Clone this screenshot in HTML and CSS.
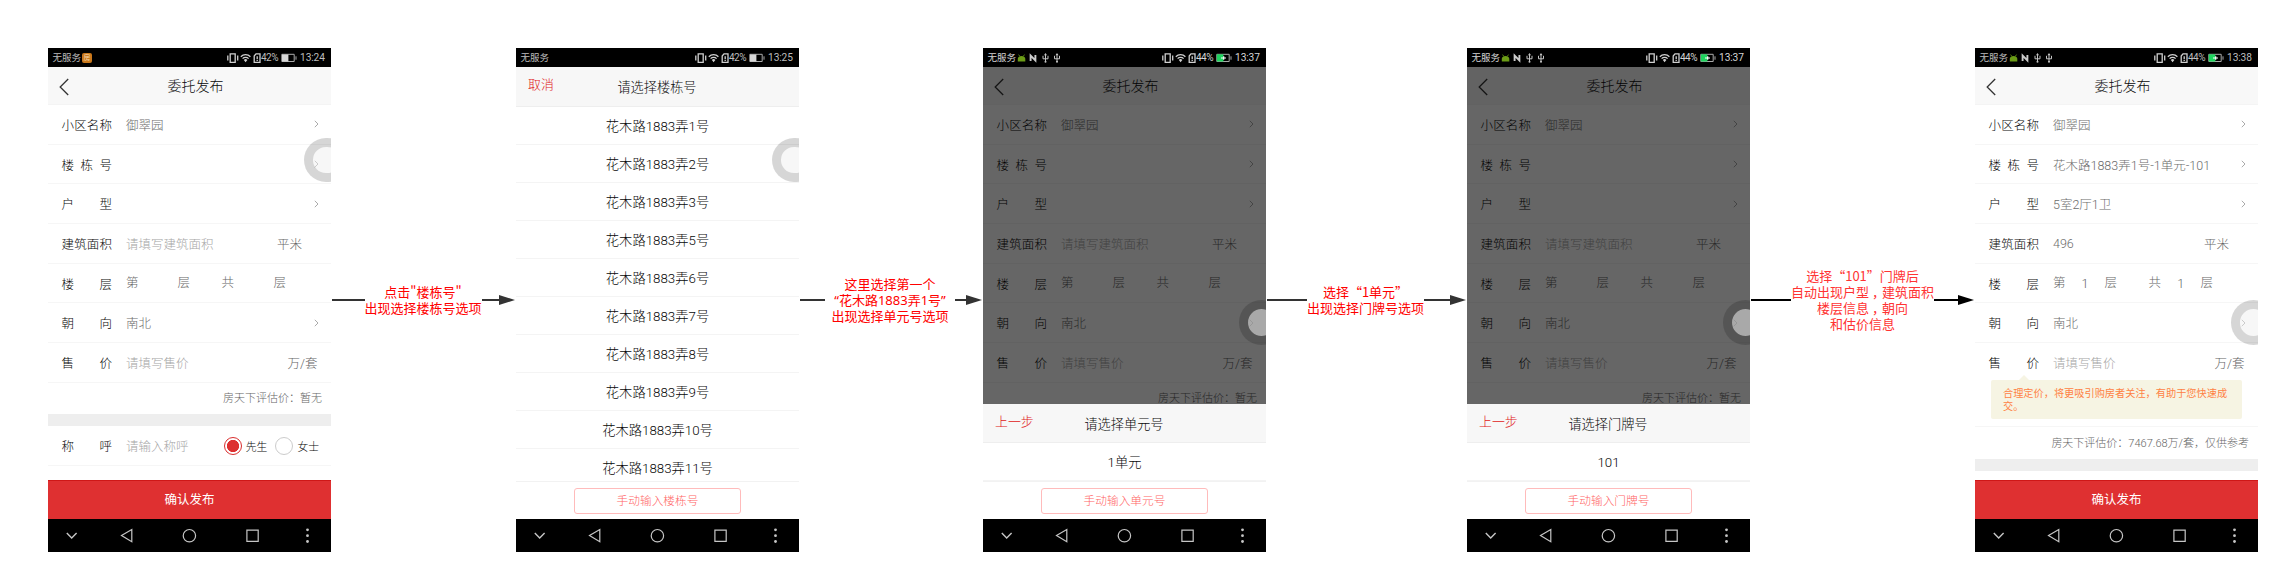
FILE: index.html
```html
<!DOCTYPE html>
<html lang="zh-CN">
<head>
<meta charset="utf-8">
<title>委托发布流程</title>
<link rel="stylesheet" href="styles.css">
</head>
<body>
<svg class="defs" width="0" height="0" aria-hidden="true">
  <symbol id="signal" viewBox="0 0 34 12">
    <g fill="none" stroke="#d0d0d0" stroke-width="1.3">
      <path d="M3.2 1.800h5v8.600h-5zM.8 3.5v5M10.700 3.5v5"/>
      <path d="M13.800 4.700a6.700 6.700 0 0 1 9.600 0M15.600 6.600a4.200 4.200 0 0 1 6 0"/>
      <path d="M27.200 4l1.800-2.200h4v8.600h-5.800zM30.200 4.200v3M30.200 8v1"/>
    </g>
    <path d="M16.800 7.900a2.600 2.600 0 0 1 3.600 0l-1.800 2.400z" fill="#d0d0d0"/>
  </symbol>
  <symbol id="battery" viewBox="0 0 16 10">
    <path d="M.8 1.300h12.400v7.200H.8zM15 3.3v3.4" fill="none" stroke="#aaa" stroke-width="1"/>
    <path d="M1 1.500h6.400v7H1z" fill="#d8d8d8"/>
  </symbol>
  <symbol id="charging" viewBox="0 0 16 10">
    <path d="M.8 1.300h12.400v7.200H.8zM15 3.3v3.4" fill="none" stroke="#aaa" stroke-width="1"/>
    <path d="M.8 1.300h6.600v7.200H.8z" fill="#1fd35e"/>
    <path d="M5 5h5M7.700 3.300v3.400" stroke="#fff" stroke-width="1.2"/>
  </symbol>
  <symbol id="notices" viewBox="0 0 44 12">
    <path d="M.8 6.800C1 3.200 8 3.200 8.300 6.800V9.600H.8z" fill="#6b9c16"/>
    <path d="M1.600 2.600l1.400 2M7.500 2.600l-1.400 2" stroke="#6b9c16" stroke-width=".8"/>
    <path d="M13.600 9V3.500l4.800 5V3" fill="none" stroke="#ccc" stroke-width="1.900"/>
    <g fill="none" stroke="#c4c4c4" stroke-width="1">
      <path d="M28.500 2v8M26 3.800v3h5v-3"/>
      <path d="M40 2v8M37.500 3.800v3h5v-3"/>
    </g>
    <g fill="#c4c4c4">
      <path d="M27 3.200L28.500 1 30 3.200zM38.500 3.200L40 1l1.500 2.200z"/>
      <circle cx="28.500" cy="9.800" r="1"/><circle cx="40" cy="9.800" r="1"/>
    </g>
  </symbol>
  <symbol id="nav" viewBox="0 0 283 33">
    <g fill="none" stroke="#c6c6c6" stroke-width="1.200">
      <path d="M18.800 14l4.900 5 4.900-5" stroke-width="1.400"/>
      <path d="M83.800 10.500v12.200L73.500 16.600z"/>
      <circle cx="141.400" cy="16.700" r="6.200"/>
      <path d="M198.900 11.100h11.300v11.300h-11.300z"/>
    </g>
    <g fill="#c6c6c6"><circle cx="259.500" cy="10.800" r="1.400"/><circle cx="259.500" cy="16.700" r="1.400"/><circle cx="259.500" cy="22.500" r="1.400"/></g>
  </symbol>
  <symbol id="back" viewBox="0 0 10 18"><path d="M9.200 1L1.200 9l8 8" fill="none" stroke="#333" stroke-width="1.300"/></symbol>
  <symbol id="more" viewBox="0 0 5 8"><path d="M.8.8L4 4 .8 7.200" fill="none" stroke="#aaa" stroke-width="1"/></symbol>
</svg>

<main class="flow">
  <section class="phone">
    <div class="status"><span>无服务</span><i class="app-icon">房</i><div class="status-right"><svg class="signal"><use href="#signal"/></svg><span class="pct">42%</span><svg class="battery"><use href="#battery"/></svg><span class="time">13:24</span></div></div>
    <div class="screen">
      <header class="title-bar"><svg class="back"><use href="#back"/></svg>委托发布</header>
      <div class="row"><label>小区名称</label><span class="value">御翠园</span><svg class="more"><use href="#more"/></svg></div>
      <div class="row"><label>楼栋号</label><span class="value"></span><svg class="more"><use href="#more"/></svg></div>
      <div class="row"><label>户型</label><span class="value"></span><svg class="more"><use href="#more"/></svg></div>
      <div class="row"><label>建筑面积</label><span class="value hint">请填写建筑面积</span><span class="unit area">平米</span></div>
      <div class="row"><label>楼层</label><div class="floors"><span>第</span><b></b><span>层</span><span>共</span><b></b><span>层</span></div></div>
      <div class="row"><label>朝向</label><span class="value">南北</span><svg class="more"><use href="#more"/></svg></div>
      <div class="row"><label>售价</label><span class="value hint">请填写售价</span><span class="unit">万/套</span></div>
      <div class="estimate">房天下评估价：暂无</div>
      <div class="divider"></div>
      <div class="row"><label>称呼</label><span class="value hint">请输入称呼</span><div class="radios"><i class="radio on"></i><span>先生</span><i class="radio"></i><span>女士</span></div></div>
      <div class="float-ball upper"></div>
    </div>
    <div class="submit">确认发布</div>
    <svg class="nav"><use href="#nav"/></svg>
  </section>

  <div class="link w1"><i class="line"></i><p>点击"楼栋号"<br>出现选择楼栋号选项</p><i class="line"></i><i class="head"></i></div>

  <section class="phone">
    <div class="status"><span>无服务</span><div class="status-right"><svg class="signal"><use href="#signal"/></svg><span class="pct">42%</span><svg class="battery"><use href="#battery"/></svg><span class="time">13:25</span></div></div>
    <div class="screen">
      <header class="picker-bar"><span class="cancel">取消</span>请选择楼栋号</header>
      <ul class="options">
        <li>花木路1883弄1号</li><li>花木路1883弄2号</li><li>花木路1883弄3号</li><li>花木路1883弄5号</li><li>花木路1883弄6号</li><li>花木路1883弄7号</li><li>花木路1883弄8号</li><li>花木路1883弄9号</li><li>花木路1883弄10号</li><li>花木路1883弄11号</li>
      </ul>
      <div class="float-ball upper"></div>
    </div>
    <div class="manual"><span>手动输入楼栋号</span></div>
    <svg class="nav"><use href="#nav"/></svg>
  </section>

  <div class="link w2"><i class="line"></i><p>这里选择第一个<br><span class="latin">“花木路1883弄1号”</span><br>出现选择单元号选项</p><i class="line"></i><i class="head"></i></div>

  <section class="phone">
    <div class="status bright"><span>无服务</span><svg class="notices"><use href="#notices"/></svg><div class="status-right"><svg class="signal"><use href="#signal"/></svg><span class="pct">44%</span><svg class="battery"><use href="#charging"/></svg><span class="time">13:37</span></div></div>
    <div class="screen">
      <header class="title-bar"><svg class="back"><use href="#back"/></svg>委托发布</header>
      <div class="row"><label>小区名称</label><span class="value">御翠园</span><svg class="more"><use href="#more"/></svg></div>
      <div class="row"><label>楼栋号</label><span class="value"></span><svg class="more"><use href="#more"/></svg></div>
      <div class="row"><label>户型</label><span class="value"></span><svg class="more"><use href="#more"/></svg></div>
      <div class="row"><label>建筑面积</label><span class="value hint">请填写建筑面积</span><span class="unit area">平米</span></div>
      <div class="row"><label>楼层</label><div class="floors"><span>第</span><b></b><span>层</span><span>共</span><b></b><span>层</span></div></div>
      <div class="row"><label>朝向</label><span class="value">南北</span><svg class="more"><use href="#more"/></svg></div>
      <div class="row"><label>售价</label><span class="value hint">请填写售价</span><span class="unit">万/套</span></div>
      <div class="estimate">房天下评估价：暂无</div>
      <div class="mask"></div>
      <div class="float-ball lower"></div>
    </div>
    <div class="sheet">
      <header class="picker-bar"><span class="cancel">上一步</span>请选择单元号</header>
      <ul class="options"><li>1单元</li></ul>
    </div>
    <div class="manual shifted"><span>手动输入单元号</span></div>
    <svg class="nav"><use href="#nav"/></svg>
  </section>

  <div class="link w3"><i class="line"></i><p>选择“1单元”<br>出现选择门牌号选项</p><i class="line"></i><i class="head"></i></div>

  <section class="phone">
    <div class="status bright"><span>无服务</span><svg class="notices"><use href="#notices"/></svg><div class="status-right"><svg class="signal"><use href="#signal"/></svg><span class="pct">44%</span><svg class="battery"><use href="#charging"/></svg><span class="time">13:37</span></div></div>
    <div class="screen">
      <header class="title-bar"><svg class="back"><use href="#back"/></svg>委托发布</header>
      <div class="row"><label>小区名称</label><span class="value">御翠园</span><svg class="more"><use href="#more"/></svg></div>
      <div class="row"><label>楼栋号</label><span class="value"></span><svg class="more"><use href="#more"/></svg></div>
      <div class="row"><label>户型</label><span class="value"></span><svg class="more"><use href="#more"/></svg></div>
      <div class="row"><label>建筑面积</label><span class="value hint">请填写建筑面积</span><span class="unit area">平米</span></div>
      <div class="row"><label>楼层</label><div class="floors"><span>第</span><b></b><span>层</span><span>共</span><b></b><span>层</span></div></div>
      <div class="row"><label>朝向</label><span class="value">南北</span><svg class="more"><use href="#more"/></svg></div>
      <div class="row"><label>售价</label><span class="value hint">请填写售价</span><span class="unit">万/套</span></div>
      <div class="estimate">房天下评估价：暂无</div>
      <div class="mask"></div>
      <div class="float-ball lower"></div>
    </div>
    <div class="sheet">
      <header class="picker-bar"><span class="cancel">上一步</span>请选择门牌号</header>
      <ul class="options"><li>101</li></ul>
    </div>
    <div class="manual"><span>手动输入门牌号</span></div>
    <svg class="nav"><use href="#nav"/></svg>
  </section>

  <div class="link w4"><i class="line"></i><p>选择“101”门牌后<br>自动出现户型<span class="comma">，</span>建筑面积<br>楼层信息<span class="comma">，</span>朝向<br>和估价信息</p><i class="line"></i><i class="head"></i></div>

  <section class="phone">
    <div class="status"><span>无服务</span><svg class="notices"><use href="#notices"/></svg><div class="status-right"><svg class="signal"><use href="#signal"/></svg><span class="pct">44%</span><svg class="battery"><use href="#charging"/></svg><span class="time">13:38</span></div></div>
    <div class="screen">
      <header class="title-bar"><svg class="back"><use href="#back"/></svg>委托发布</header>
      <div class="row"><label>小区名称</label><span class="value">御翠园</span><svg class="more"><use href="#more"/></svg></div>
      <div class="row"><label>楼栋号</label><span class="value">花木路1883弄1号-1单元-101</span><svg class="more"><use href="#more"/></svg></div>
      <div class="row"><label>户型</label><span class="value">5室2厅1卫</span><svg class="more"><use href="#more"/></svg></div>
      <div class="row"><label>建筑面积</label><span class="value">496</span><span class="unit area">平米</span></div>
      <div class="row"><label>楼层</label><div class="floors"><span>第</span><b>1</b><span>层</span><span>共</span><b>1</b><span>层</span></div></div>
      <div class="row"><label>朝向</label><span class="value">南北</span><svg class="more"><use href="#more"/></svg></div>
      <div class="row no-line"><label>售价</label><span class="value hint">请填写售价</span><span class="unit">万/套</span></div>
      <div class="tip-wrap"><div class="tip">合理定价，将更吸引购房者关注，有助于您快速成交。</div></div>
      <div class="estimate final">房天下评估价：7467.68万/套，仅供参考</div>
      <div class="divider"></div>
      <div class="float-ball lower"></div>
    </div>
    <div class="submit">确认发布</div>
    <svg class="nav"><use href="#nav"/></svg>
  </section>
</main>
</body>
</html>
```

FILE: styles.css
```css
* { box-sizing: border-box; }

body {
  margin: 0;
  background: #fff;
  font-family: Roboto, "Noto Sans CJK SC", sans-serif;
  font-weight: 300;
  color: #080808;
}

.defs { position: absolute; }
svg { display: block; flex: none; }
i { font-style: normal; }

.flow {
  display: flex;
  width: 2290px;
  height: 584px;
  padding: 48px 0 32px 48px;
  overflow: hidden;
}

/* phone shell */
.phone {
  flex: none;
  display: flex;
  flex-direction: column;
  width: 283px;
  height: 504px;
  background: #fff;
  overflow: hidden;
}

.status {
  flex: none;
  display: flex;
  align-items: center;
  height: 19px;
  padding: 0 6px 0 4.500px;
  background: #000;
  color: #bdbdbd;
  font-size: 9.500px;
  font-weight: 400;
  line-height: 19px;
}
.status.bright { color: #d4d4d4; }
.status-right { display: flex; align-items: center; margin-left: auto; }
.app-icon {
  width: 10px;
  height: 10px;
  margin-left: 1px;
  border-radius: 2px;
  background: #c9781b;
  color: #f1d3a8;
  font-size: 7px;
  line-height: 10px;
  text-align: center;
}
.notices { width: 44px; height: 12px; margin-left: 1px; }
.signal { width: 34px; height: 12px; }
.pct { width: 19px; font-size: 10px; letter-spacing: -.5px; white-space: nowrap; }
.battery { width: 16px; height: 10px; margin-left: 1px; }
.time { width: 25px; margin-left: 3px; font-size: 10.200px; letter-spacing: -.1px; white-space: nowrap; }

.screen {
  flex: 1 1 0;
  min-height: 0;
  position: relative;
  overflow: hidden;
}

.nav { width: 283px; height: 33px; background: #000; }

/* form */
.title-bar {
  position: relative;
  height: 38px;
  padding-left: 12px;
  background: #f8f8f8;
  border-bottom: 1px solid #f4f4f4;
  font-size: 14px;
  line-height: 38px;
  text-align: center;
}
.back { position: absolute; left: 11px; top: 10.500px; width: 10px; height: 18px; }

.row {
  display: flex;
  align-items: center;
  height: 39.700px;
  padding-left: 13.500px;
  border-bottom: 1px solid #f6f6f6;
  font-size: 12.500px;
}
.row.no-line { border-bottom: 0; }
.row label {
  width: 50.500px;
  margin-right: 14px;
  text-align: justify;
  text-align-last: justify;
  white-space: nowrap;
}
.value { color: #6c6c6c; white-space: nowrap; }
.value.hint { color: #a6a6a6; }
.more { width: 5px; height: 8px; margin: 0 12px 0 auto; }
.unit { margin: 0 13.500px 0 auto; color: #666; }
.unit.area { margin-right: 29px; }

.floors {
  display: grid;
  grid-template-columns: 12.500px 39px 44px 12.500px 39.500px 12.500px;
  align-items: center;
  line-height: 18px;
  color: #666;
}
.floors b { padding-top: 1px; font-weight: 300; text-align: center; }

.estimate {
  height: 31.400px;
  padding-right: 9px;
  font-size: 11px;
  line-height: 32px;
  text-align: right;
  color: #666;
}
.estimate.final { height: 32.700px; border-top: 1px solid #f6f6f6; line-height: 34px; }
.divider { height: 12px; background: #eee; }

.radios { display: flex; align-items: center; margin: 0 12px 0 auto; font-size: 10.800px; }
.radio { width: 18px; height: 18px; border: 1px solid #ccc; border-radius: 50%; }
.radio.on { border-color: #d92d2d; background: radial-gradient(circle, #dd3030 5.800px, #fff 6.400px); }
.radios span { margin: 0 8px 0 4px; }
.radios span:last-child { margin-right: 0; }

.submit {
  flex: none;
  height: 39px;
  background: #df3031;
  border-top: 1px solid #cf1717;
  color: #fff;
  font-size: 12.500px;
  font-weight: 400;
  line-height: 38px;
  text-align: center;
}

.tip-wrap { height: 43.500px; padding: 0 16px; }
.tip {
  position: relative;
  top: -2.500px;
  height: 39px;
  padding: 8px 12px 0;
  border-radius: 2px;
  background: #f6f4e3;
  color: #ff8243;
  font-size: 10.200px;
  font-weight: 400;
  line-height: 12.600px;
}
.tip::before {
  content: "";
  position: absolute;
  left: 28px;
  top: -5px;
  border: 5px solid transparent;
  border-top: 0;
  border-bottom-color: #f6f4e3;
}

/* floating assist ball and dimming layer lie over the screen */
.mask { position: absolute; inset: 0; background: rgba(0, 0, 0, .6); }
.float-ball {
  position: absolute;
  left: 256px;
  width: 44.600px;
  height: 44.600px;
  border: 9.600px solid rgba(0, 0, 0, .16);
  border-radius: 50%;
  background: rgba(239, 239, 239, .49);
  background-clip: padding-box;
}
.float-ball.upper { top: 70.700px; }
.float-ball.lower { top: 233px; }

/* option picker */
.picker-bar {
  position: relative;
  height: 39.500px;
  padding-right: 1px;
  background: #f7f7f7;
  border-bottom: 1px solid #eee;
  font-size: 13.200px;
  line-height: 41px;
  text-align: center;
}
.cancel { position: absolute; left: 12px; top: -3px; color: #e02020; font-size: 12.900px; }
.options { margin: 0; padding: 0; list-style: none; }
.options li {
  height: 38.100px;
  border-bottom: 1px solid #f4f4f4;
  font-size: 13.300px;
  line-height: 39px;
  text-align: center;
}
.sheet { flex: none; height: 77.500px; background: #fff; }
.manual {
  flex: none;
  position: relative;
  display: flex;
  justify-content: center;
  height: 38px;
  padding-top: 6px;
  border-top: 1px solid #f2f2f2;
  background: #fff;
}
.manual.shifted { justify-content: flex-start; padding-left: 58px; }
.manual span {
  width: 167px;
  height: 26px;
  border: 1px solid #fbb;
  border-radius: 3px;
  color: #ff6565;
  font-size: 11.700px;
  line-height: 25px;
  text-align: center;
}

/* connectors */
.link {
  flex: none;
  display: flex;
  align-items: center;
  padding: 0 1px;
  height: 504px;
  color: #333;
}
.w1 { width: 185px; }
.w2 { width: 184px; }
.w3 { width: 201px; }
.w4 { width: 225px; color: #000; }
.link p {
  flex: none;
  width: 117px;
  margin: 0;
  color: #f00;
  font-family: "Noto Sans CJK SC", sans-serif;
  font-size: 13px;
  font-weight: 400;
  line-height: 16px;
  text-align: center;
  white-space: nowrap;
}
.w2 p { width: 130px; }
.w4 p { width: 143px; color: #f33; }
.latin { font-family: "Noto Sans", "Noto Sans CJK SC", sans-serif; }
.comma { position: relative; left: 3px; }
.line { flex: 1; height: 2px; background: currentColor; }
.line:first-child { flex: none; width: 32.500px; }
.w2 .line:first-child { width: 25px; }
.w3 .line:first-child, .w4 .line:first-child { width: 40px; }
.head {
  flex: none;
  border: solid transparent;
  border-width: 5.500px 0 5.500px 16px;
  border-left-color: currentColor;
}
```
